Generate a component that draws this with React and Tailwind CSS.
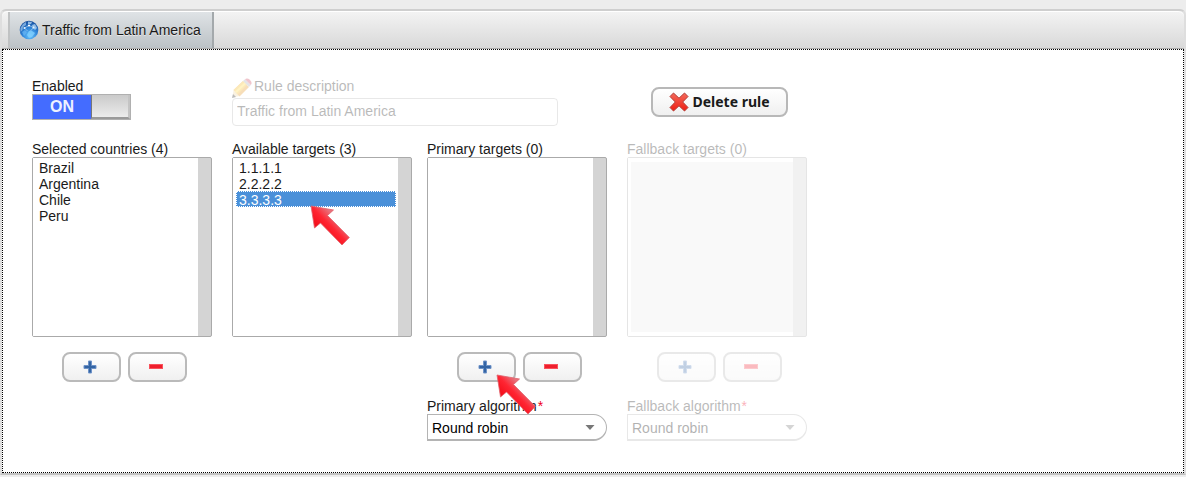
import React, { useState } from 'react';

function GlobeIcon() {
  return (
    <svg className="w-5 h-5 shrink-0" viewBox="0 0 20 20" aria-hidden="true">
      <defs>
        <radialGradient id="globe" cx="55%" cy="80%" r="80%">
          <stop offset="0" stopColor="#6cc8ff" />
          <stop offset="0.5" stopColor="#2f84d8" />
          <stop offset="1" stopColor="#164a98" />
        </radialGradient>
      </defs>
      <circle cx="10" cy="10" r="9.300" fill="url(#globe)" />
      <path d="M1.500 8L4 4L7 2L7 5L4 7L3.500 10L1.500 12Z" fill="#8fbce8" opacity="0.8" />
      <path d="M9 1.500L13 2L12 4L9 4Z" fill="#9dc6ec" opacity="0.9" />
      <path d="M13 5L16 4L18 8L16 10L14 8Z" fill="#b9daf5" opacity="0.75" />
      <path d="M3 12L6 10L8 12L6 15L5 16Z" fill="#6bb8f5" opacity="0.7" />
      <path d="M10 11L13 11L16 13L13 17L10 18L8 15Z" fill="#7fd0ff" opacity="0.8" />
      <path
        d="M10 5.500L5.500 8M10 5.500L14.500 7.500M5.500 8L8.500 11M14.500 7.500L11.500 11"
        stroke="#cfe6fa"
        strokeWidth="0.700"
        opacity="0.8"
        fill="none"
      />
      <circle cx="10" cy="5.500" r="1.100" fill="#fff" />
      <circle cx="5.500" cy="8" r="1" fill="#e6f4ff" />
      <circle cx="14.500" cy="7.500" r="1" fill="#e6f4ff" />
    </svg>
  );
}

function PencilIcon() {
  return (
    <svg className="w-5 h-5 shrink-0" viewBox="0 0 20 20" aria-hidden="true">
      <path d="M0.500 19.500L1.500 12.500L7.500 18Z" fill="#ecd29a" />
      <path d="M0 20L1 16L4 19Z" fill="#222" />
      <path d="M1.500 12L11 3L17 9L7.500 18.500Z" fill="#e8951a" />
      <path d="M1.500 12L11 3L15 7L5.500 16.500Z" fill="#f8b81c" />
      <path d="M3 13.500L12.500 4.500L14 6L4.500 15Z" fill="#ffd840" />
      <path d="M11 3L13 1.300L18.800 7L17 9Z" fill="#a9a9b3" />
      <path d="M13 1.300Q15 -0.500 17.800 1.700Q20.800 4.500 18.800 7Z" fill="#d04258" />
    </svg>
  );
}

function CrossIcon() {
  return (
    <svg className="w-5 h-5 shrink-0" viewBox="0 0 20 20" aria-hidden="true">
      <defs>
        <linearGradient id="cross" x1="0" y1="0" x2="0" y2="1">
          <stop offset="0" stopColor="#f46a5c" />
          <stop offset="1" stopColor="#ee1c10" />
        </linearGradient>
      </defs>
      <path
        d="M4.500 1L10 6.200L15.500 1L19 4.500L13.700 10L19 15.500L15.500 19L10 13.800L4.500 19L1 15.500L6.300 10L1 4.500Z"
        fill="url(#cross)"
        stroke="#b23a34"
        strokeWidth="1"
        strokeLinejoin="round"
      />
    </svg>
  );
}

function PlusIcon() {
  return (
    <svg className="w-4 h-4" viewBox="0 0 16 16" aria-hidden="true">
      <path
        d="M6.500 2H9.500V6.500H14V9.500H9.500V14H6.500V9.500H2V6.500H6.500Z"
        fill="#3465a4"
        stroke="#6f93c8"
        strokeWidth="1"
      />
    </svg>
  );
}

function MinusIcon() {
  return (
    <svg className="w-4 h-4" viewBox="0 0 16 16" aria-hidden="true">
      <rect x="1.500" y="5.500" width="13" height="4" fill="#ef1f2d" stroke="#f8525b" />
    </svg>
  );
}

function PointerArrow() {
  return (
    <svg className="w-10 h-[42px]" viewBox="0 0 40 42" aria-hidden="true">
      <defs>
        <linearGradient id="arrow" x1="0.300" y1="0.650" x2="0.650" y2="0.300">
          <stop offset="0" stopColor="#f5101c" />
          <stop offset="0.500" stopColor="#ff2532" />
          <stop offset="1" stopColor="#e8707a" />
        </linearGradient>
      </defs>
      <path
        d="M1 1L23.500 5L17.500 10.500L39.300 32.500L32 40L10.500 18L4.500 23Z"
        fill="url(#arrow)"
        stroke="#e0626c"
        strokeWidth="0.800"
      />
    </svg>
  );
}

function IconButton({ label, disabled, children }) {
  return (
    <button
      type="button"
      aria-label={label}
      disabled={disabled}
      className="flex w-[59px] h-[30px] items-center justify-center rounded-lg border-2 border-[#bababa] bg-linear-to-b from-white to-[#f0f0f0] pr-1"
    >
      {children}
    </button>
  );
}

function TargetList({ id, title, options, selected, disabled, pointer, showButtons = true, pointAtAdd, algorithm }) {
  return (
    <div className={disabled ? 'w-[180px] opacity-30' : 'w-[180px]'}>
      <label htmlFor={id} className="block">
        {title} ({options.length})
      </label>
      <div className="relative h-[180px] rounded-xs border border-[#aaa] bg-[#d4d4d4] pr-[13px]">
        <select
          id={id}
          multiple
          disabled={disabled}
          defaultValue={selected ? [selected] : []}
          className="block h-full w-full overflow-hidden border-x-3 border-t border-b-4 border-r-2 border-white bg-white p-0 outline-none disabled:border-t-4 disabled:border-r-0 disabled:bg-[#ededed] disabled:opacity-100"
        >
          {options.map((option) => (
            <option
              key={option}
              value={option}
              className="h-4 min-h-4 border border-transparent px-[2px] py-0 leading-[14px] checked:border-dotted checked:border-white checked:bg-[linear-gradient(#4a90d9,#4a90d9)] checked:[-webkit-text-fill-color:white]"
            >
              {option}
            </option>
          ))}
        </select>
        {pointer && (
          <div className="pointer-events-none absolute left-[77px] top-[47px]">
            <PointerArrow />
          </div>
        )}
      </div>
      {showButtons && (
        <div className="mt-[15px] flex gap-[7px] pl-[30px]">
          <div className="relative">
            <IconButton label={`Add to ${title}`} disabled={disabled}>
              <PlusIcon />
            </IconButton>
            {pointAtAdd && (
              <div className="pointer-events-none absolute left-[39px] top-[22px] z-10">
                <PointerArrow />
              </div>
            )}
          </div>
          <IconButton label={`Remove from ${title}`} disabled={disabled}>
            <MinusIcon />
          </IconButton>
        </div>
      )}
      {algorithm && (
        <div className="mt-4">
          <label htmlFor={`${id}-algorithm`} className="block">
            {algorithm}
            <span className="ml-px text-[#f00020]">*</span>
          </label>
          <div className="relative">
            <select
              id={`${id}-algorithm`}
              disabled={disabled}
              className="block h-[27px] w-full appearance-none rounded-l-sm rounded-r-full border border-b-2 border-[#b4b4b4] bg-white pt-[2px] pl-1 pr-8 text-black disabled:opacity-100"
            >
              <option>Round robin</option>
              <option>Weighted</option>
            </select>
            <svg
              className="pointer-events-none absolute right-3 top-[11px] h-[5px] w-[10px]"
              viewBox="0 0 10 5"
              aria-hidden="true"
            >
              <path d="M0.500 0H9.500L5 5Z" fill="#777" />
            </svg>
          </div>
        </div>
      )}
    </div>
  );
}

export default function App() {
  const [enabled, setEnabled] = useState(true);

  return (
    <div className="min-h-screen bg-[#ededed] pt-[9px] font-['Liberation_Sans',Arial,sans-serif] text-sm leading-4 text-[#1a1a1a]">
      <main className="rounded-t-md border-2 border-t-[#cfcfcf] border-x-[#dedede] border-b-[#c2c2c2]">
        <nav className="flex h-[38px] rounded-t-md border-t border-b border-t-white border-b-[#aaa] bg-linear-to-b from-[#f3f3f3] to-[#d9d9d9] pl-[6px]">
          <button
            type="button"
            className="flex items-center gap-[3px] border-x-2 border-l-[#c0c2c3] border-r-[#a4a9ac] bg-linear-to-b from-[#dfe3e6] to-[#bcc2c6] pl-[9px] pr-[11px]"
          >
            <GlobeIcon />
            <span className="[text-shadow:0_1px_0_#e8e8e8]">Traffic from Latin America</span>
          </button>
        </nav>

        <section className="border border-dotted border-black bg-white px-[29px] pt-7 pb-[31px]">
          <div className="flex h-[63px] items-start">
            <label className="w-[200px]">
              <span className="block">Enabled</span>
              <input
                type="checkbox"
                className="sr-only"
                checked={enabled}
                onChange={(e) => setEnabled(e.target.checked)}
              />
              <span className="flex h-[26px] w-[99px] border border-[#b0b0b0] bg-[#446cff]">
                <span className="flex-1 text-center text-base leading-6 font-bold text-[#eef1ff]">
                  {enabled ? 'ON' : 'OFF'}
                </span>
                <span className="w-[39px] border-r-2 border-b-2 border-l border-l-[#777] border-r-[#c4c4c4] border-b-[#9a9a9a] bg-linear-to-b from-[#cacaca] to-[#ececec]" />
              </span>
            </label>
            <div className="w-[326px] opacity-30">
              <label htmlFor="description" className="flex h-5 items-start gap-[2px]">
                <PencilIcon />
                <span>Rule description</span>
              </label>
              <input
                id="description"
                type="text"
                defaultValue="Traffic from Latin America"
                disabled
                className="block h-7 w-full rounded-sm border border-[#b4b4b4] px-1 pb-[2px]"
              />
            </div>
            <button
              type="button"
              className="mt-[9px] ml-[93px] flex h-[30px] w-[137px] items-center justify-center gap-[3px] rounded-lg border-2 border-[#b8b8b8] bg-linear-to-b from-white to-[#f0f0f0] font-['Noto_Sans','Open_Sans',sans-serif] font-bold"
            >
              <CrossIcon />
              <span>Delete rule</span>
            </button>
          </div>

          <div className="grid grid-cols-[200px_195px_200px_180px] items-start">
            <TargetList
              id="countries"
              title="Selected countries"
              options={['Brazil', 'Argentina', 'Chile', 'Peru']}
            />
            <TargetList
              id="available"
              title="Available targets"
              options={['1.1.1.1', '2.2.2.2', '3.3.3.3']}
              selected="3.3.3.3"
              showButtons={false}
              pointer
            />
            <TargetList
              id="primary"
              title="Primary targets"
              options={[]}
              pointAtAdd
              algorithm="Primary algorithm"
            />
            <TargetList
              id="fallback"
              title="Fallback targets"
              options={[]}
              disabled
              algorithm="Fallback algorithm"
            />
          </div>
        </section>
      </main>
    </div>
  );
}
